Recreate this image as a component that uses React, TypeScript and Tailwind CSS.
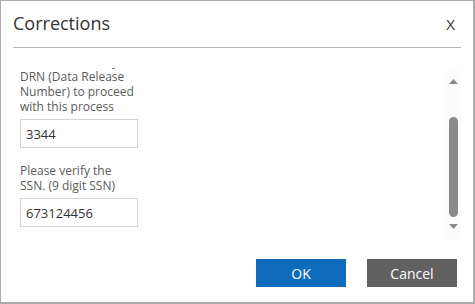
const App = () => {
  return (
    <div
      className="w-[475px] h-[304px] bg-white border border-r-2 border-b-2 border-[#ababab] flex flex-col"
      style={{ fontFamily: '"Open Sans", "Liberation Sans", sans-serif' }}
    >
      {/* Header */}
      <div className="mx-[12px] h-[47px] flex items-start justify-between border-b border-[#b4b4b4]">
        <h1 className="mt-[8px] text-[18px] leading-[28px] text-[#333333]">Corrections</h1>
        <button className="mt-[13px] mr-[6px] text-[15px] leading-[20px] text-[#333333]">X</button>
      </div>

      {/* Scroll area */}
      <div className="mx-[12px] mt-[20px] h-[172px] flex">
        <div className="relative flex-1 overflow-hidden pl-[7px] text-[12px] leading-[15px] text-[#5a5a5a]">
          <span className="absolute left-[99px] top-0 w-[3px] h-px bg-[#777777]" />
          <div className="mt-px w-[116px]">DRN (Data Release Number) to proceed with this process</div>
          <input
            readOnly
            value="3344"
            className="mt-[5px] w-[118px] h-[29px] border border-[#d4d4d4] px-[5px] text-[13px] text-[#333333] outline-none"
            style={{ fontFamily: 'inherit' }}
          />
          <div className="mt-[15px] w-[116px]">Please verify the SSN. (9 digit SSN)</div>
          <input
            readOnly
            value="673124456"
            className="mt-[5px] w-[118px] h-[29px] border border-[#d4d4d4] px-[5px] text-[13px] text-[#333333] outline-none"
            style={{ fontFamily: 'inherit' }}
          />
        </div>

        {/* Scrollbar */}
        <div className="w-[15px] mt-px bg-[#fbfbfb] flex flex-col items-center">
          <svg width="9" height="5" viewBox="0 0 9 5" className="mt-[10px]">
            <path d="M0 5 L4.5 0 L9 5 Z" fill="#8a8a8a" />
          </svg>
          <div className="mt-[33px] w-[9px] h-[100px] rounded-full bg-[#8a8a8a]" />
          <svg width="9" height="5" viewBox="0 0 9 5" className="mt-[7px]">
            <path d="M0 0 L4.5 5 L9 0 Z" fill="#8a8a8a" />
          </svg>
        </div>
      </div>

      {/* Footer */}
      <div className="mx-[16px] mt-[19px] flex justify-end gap-[21px]">
        <button className="w-[90px] h-[28px] bg-[#0f6cbd] text-white text-[14px]">OK</button>
        <button className="w-[90px] h-[28px] bg-[#616161] text-white text-[14px]">Cancel</button>
      </div>
    </div>
  );
};

export default App;
